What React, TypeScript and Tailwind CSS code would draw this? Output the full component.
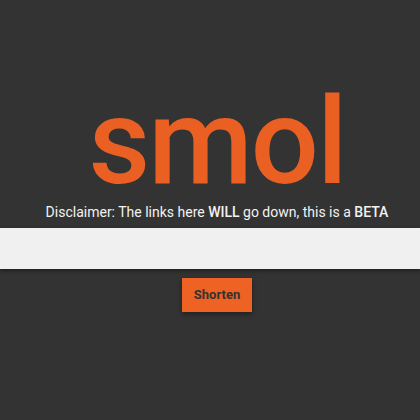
export default function App() {
  return (
    <div className="w-[420px] h-[420px] bg-[#333333] flex flex-col items-center" style={{ fontFamily: "Roboto, sans-serif" }}>
      <h1 className="mt-[92px] pl-[14px] text-[120px] leading-[100px] text-[#ea5f22] font-medium tracking-[-2px]">smol</h1>
      <p className="mt-[12px] pl-[14px] text-[14px] leading-[16px] text-[#f2f2f2]">
        Disclaimer: The links here <b className="font-medium">WILL</b> go down, this is a <b className="font-medium">BETA</b>
      </p>
      <div className="mt-[8px] w-full h-[41px] bg-[#f0f0f0] shadow-[0_2px_4px_rgba(0,0,0,0.4)]"></div>
      <button className="mt-[9px] ml-[14px] w-[70px] h-[34px] bg-[#ee6223] text-[#333] text-[13px] font-bold shadow-[0_2px_5px_rgba(0,0,0,0.4)]">Shorten</button>
    </div>
  );
}
